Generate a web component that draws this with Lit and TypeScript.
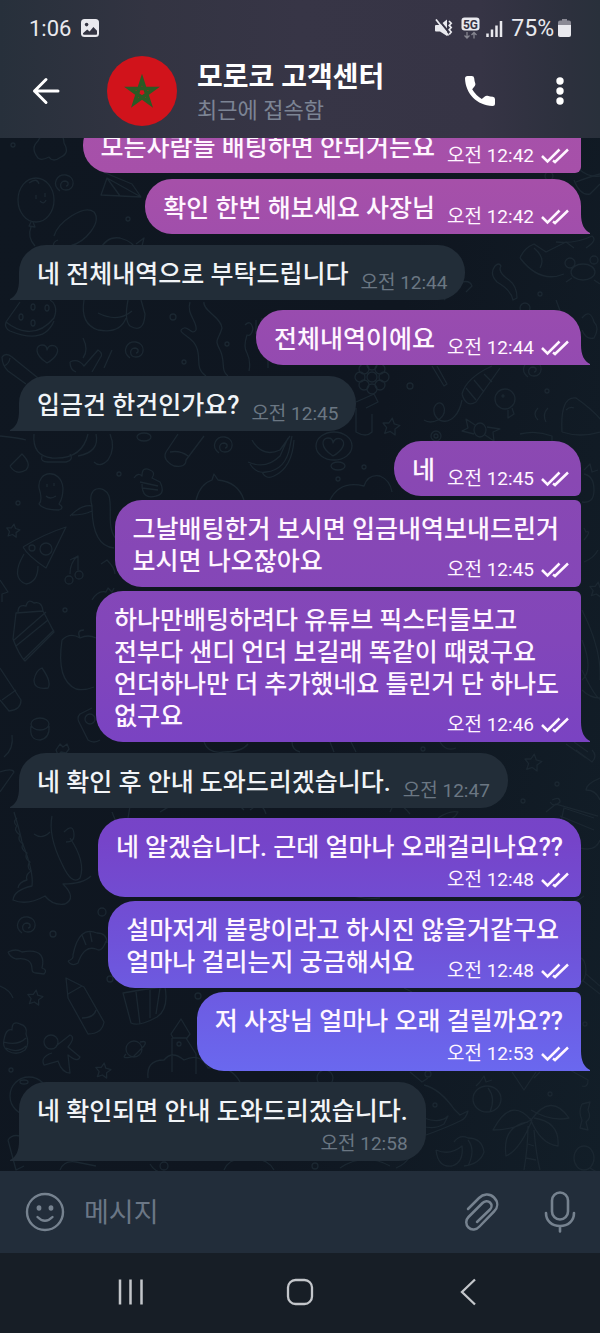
import { LitElement, html, css, svg } from "lit";
import { customElement, property } from "lit/decorators.js";

type Placement = "beside" | "below" | "within";

interface Message {
  out: boolean;
  lines: string[];
  time: string;
  place: Placement;
  first: boolean;
  last: boolean;
  regrouped?: boolean;
}

const msg = (
  out: boolean,
  lines: string[],
  time: string,
  place: Placement = "beside",
  first = true,
  last = true
): Message => ({ out, lines, time, place, first, last });

const MESSAGES: Message[] = [
  msg(true, ["모든사람들 배팅하면 안되거든요"], "12:42", "beside", false, false),
  { ...msg(true, ["확인 한번 해보세요 사장님"], "12:42"), regrouped: true },
  msg(false, ["네 전체내역으로 부탁드립니다"], "12:44"),
  msg(true, ["전체내역이에요"], "12:44"),
  msg(false, ["입금건 한건인가요?"], "12:45"),
  msg(true, ["네"], "12:45", "beside", true, false),
  msg(true, ["그날배팅한거 보시면 입금내역보내드린거", "보시면 나오잖아요"], "12:45", "within", false, false),
  msg(
    true,
    ["하나만배팅하려다 유튜브 픽스터들보고", "전부다 샌디 언더 보길래 똑같이 때렸구요", "언더하나만 더 추가했네요 틀린거 단 하나도", "없구요"],
    "12:46",
    "within",
    false,
    true
  ),
  msg(false, ["네 확인 후 안내 도와드리겠습니다."], "12:47"),
  msg(true, ["네 알겠습니다. 근데 얼마나 오래걸리나요??"], "12:48", "below", true, false),
  msg(true, ["설마저게 불량이라고 하시진 않을거같구요", "얼마나 걸리는지 궁금해서요"], "12:48", "within", false, false),
  msg(true, ["저 사장님 얼마나 오래 걸릴까요??"], "12:53", "below", false, true),
  msg(false, ["네 확인되면 안내 도와드리겠습니다."], "12:58", "below"),
];

@customElement("chat-message")
export class ChatMessage extends LitElement {
  @property({ attribute: false }) message!: Message;

  static styles = css`
    :host {
      display: flex;
    }
    .bubble {
      position: relative;
      display: flex;
      box-sizing: border-box;
      padding: 14px 12px 5px 18px;
      border-radius: 27px;
    }
    .out {
      margin-left: auto;
      color: #fff6ff;
      background: linear-gradient(
          #a753ab 0,
          #a650a9 180px,
          #964bb0 340px,
          #8948b3 480px,
          #8246ba 640px,
          #7a43c2 740px,
          #7644c9 840px,
          #6f52d8 940px,
          #6a68ef 1072px
        )
        fixed;
    }
    .in {
      padding-right: 18px;
      color: #f1f4f7;
      background: #222d38;
    }
    .out.joined {
      border-top-right-radius: 6px;
    }
    .out.open {
      border-bottom-right-radius: 6px;
    }
    .out.tail {
      border-bottom-right-radius: 0;
    }
    .in.tail {
      border-bottom-left-radius: 0;
    }
    .tail::after {
      content: "";
      position: absolute;
      bottom: 0;
      width: 10px;
      height: 20px;
      background: inherit;
    }
    .out.tail::after {
      left: 100%;
      clip-path: path("M0 0C0 10 3 16 9 19L9 20L0 20Z");
    }
    .in.tail::after {
      right: 100%;
      clip-path: path("M10 0C10 10 7 16 1 19L1 20L10 20Z");
    }
    .beside {
      align-items: flex-end;
      gap: 12px;
    }
    .below {
      flex-direction: column;
    }
    .within {
      display: grid;
    }
    .text {
      margin: 0;
      padding-bottom: 4px;
      font-size: 25px;
      line-height: 32px;
      font-weight: 500;
    }
    .out.below .text {
      padding-right: 6px;
    }
    .within .text {
      grid-area: 1 / 1;
      padding-right: 10px;
    }
    .meta {
      display: flex;
      align-items: center;
      align-self: flex-end;
      gap: 7px;
      font-size: 19px;
      line-height: 24px;
      white-space: nowrap;
    }
    .within .meta {
      grid-area: 1 / 1;
      place-self: end;
    }
    .in .meta {
      color: #6b7783;
    }
    .checks {
      width: 28px;
      height: 16px;
    }
  `;

  render() {
    const m = this.message;
    const cls = [
      "bubble",
      m.out ? "out" : "in",
      m.place,
      m.first ? "" : "joined",
      m.last ? "tail" : "open",
    ].join(" ");
    return html`<div class=${cls}>
      <p class="text">${m.lines.map((l, i) => (i ? html`<br />${l}` : l))}</p>
      <div class="meta">
        <time>오전 ${m.time}</time>
        ${m.out
          ? html`<svg class="checks" viewBox="0 0 28 16" fill="none" stroke="currentColor" stroke-width="2.5" aria-label="읽음">
              <path d="M1 8L6.500 13.500L18.500 1.500M12 12.500L14 14L27 1.500" />
            </svg>`
          : null}
      </div>
    </div>`;
  }
}

/* Doodle helpers for the wallpaper */
const star = (x: number, y: number, r: number) => {
  let d = "";
  for (let i = 0; i < 10; i++) {
    const a = -Math.PI / 2 + (i * Math.PI) / 5 + 0.15;
    const k = i % 2 ? r * 0.5 : r;
    d += `${i ? "L" : "M"}${(x + k * Math.cos(a)).toFixed(1)} ${(y + k * Math.sin(a)).toFixed(1)}`;
  }
  return d + "Z";
};
const ring = (x: number, y: number, rx: number, ry = rx) =>
  `M${x - rx} ${y}a${rx} ${ry} 0 1 0 ${2 * rx} 0a${rx} ${ry} 0 1 0 ${-2 * rx} 0`;
const heart = (x: number, y: number) =>
  `M${x} ${y + 9}c-14-9-11-18-5-18q5 0 5 5q2-6 8-4c6 4 1 12-8 17`;
const spiral = (x: number, y: number) =>
  `M${x - 6} ${y + 7}c-9-7-3-17 6-16c10 2 9 15 0 15c-7 0-7-9-1-9c5 1 3 5 1 5`;
const candy = (x: number, y: number) =>
  `${ring(x, y, 6, 7)}M${x - 5} ${y - 5}l-9-6l2 9l-6 3l12 3M${x + 5} ${y + 5}l9 6l-1-9l7-3l-13-2`;
const flower = (x: number, y: number) => {
  let d = ring(x, y, 5);
  for (let i = 0; i < 8; i++) {
    const a = (i * Math.PI) / 4;
    d += ring(Math.round(x + 12 * Math.cos(a)), Math.round(y + 12 * Math.sin(a)), 5, 5);
  }
  return d;
};

const DOODLES: string[] = [
  "M38 158q-8-10 0-17q4-9 14-6q12-3 12 8q6 10-3 14q-8 6-12 0q-8 4-11 1",
  ring(13, 145, 2),
  ring(36, 200, 18, 22) + "M31 222l-2 4l6 1l-2-5M31 227q-4 10 4 19M29 183q8-6 10 1M36 195v4M45 193v4M40 201q4 4 6-1",
  spiral(66, 184),
  "M101 195L107 178L141 197ZM107 178L120 196L141 197M103 172L132 184L141 197",
  "M54 236c4-14 30-32 40-24c8 10-8 30-24 34M58 240c-6 2-6 8-1 10",
  ring(128, 219, 2),
  "M100 250q6-14 20-12q14 4 16 12M136 244l8-6l-2 8",
  "M6 322C16 330 36 340 54 318C58 308 54 302 50 300M6 322q-2 6 4 9q34 14 44-10M6 322L20 302",
  ring(21, 317, 2, 3) + ring(33, 307, 2, 3) + ring(33, 323, 2, 3) + ring(47, 308, 2, 3),
  "M2 357q4-5 10 0L38 378M2 357q0 8 6 14L26 384M10 358q-1 6-6 8",
  heart(47, 354),
  "M84 300q-4 24 14 30q22 4 28-12M98 313q20 10 34-2M128 300q-4 20 2 26q14 8 15-12l-4-14",
  spiral(136, 351),
  "M83 338q6 12 0 20M70 362q8-4 14 4l14-16q6 4 2 8l-8 14M70 362q0 8 6 10M112 350l-8 18",
  ring(173, 317, 3) + ring(184, 362, 2) + ring(227, 344, 2),
  "M190 302c-4 12 8 20 6 28c-4 6-8-4-12-2c-10 4 8 8 12 18c6 12-2 22 10 30M204 302c-2 8 18 16 18 26c-4 14-8 10-2 22c6 12 0 20 8 26",
  "M245 325q6-6 8 4q-2 8-6 6q-4 12 0 18q4 8 2 18M256 320v14M262 318v16M268 340v28",
  "M34 434q-2 22 18 24q30 2 36-24M42 456q-2 6 6 6h18q8-2 4-8M96 434q4 18-18 22M110 434q6 14-2 26q-8 8-14 2",
  "M10 466q10-10 12-12q10 10 4 16q-10 6-16-4M0 436q20 2 26 4",
  ring(144, 437, 7, 4),
  "M178 434l-12 18q-4 8 8 14q12 2 12-6l18-24M170 452q10-2 18 4",
  spiral(225, 446),
  "M252 440q10 18 28 10l10-14M248 462q18 8 32-6l8-18M250 464q6 10 16 8q20-2 24-26l2-10M262 472q4 8 12 4q18-8 20-36",
  "M39 488c-2-18 22-20 24 0q0 10-4 16q6 4 0 6q-16 0-20-6q4-4 0-16M47 484v3M54 483v3M46 496q4 4 10 0",
  ring(119, 474, 2) + ring(18, 503, 2),
  "M134 478q4-6 8-2q0-10 8-6q6 2 2 8l8 4q6 12-4 14q-14 4-14-12M140 482l18 4M142 488l16 2",
  "M70 516q12-12 22-10c-6-20 12-22 17-10c4 14-4 34 10 46M92 506q0 40 22 42M72 515q12 0 20-4",
  "M196 500q4-16 16-20l2-6l4 6q20 2 26 20",
  star(13, 531, 7),
  "M23 547Q44 534 66 527L46 568Q28 556 23 547M24 554q-14 24 2 30q12-2 12-18" + ring(46, 549, 6) + ring(32, 548, 3),
  ring(69, 580, 4) + ring(79, 575, 4) + "M70 574q0-12 8-18M78 570l0-14l-8 4",
  "M101 564l6-4q8 8 8 14M0 580l8 12l-6 2v8",
  "M18 612q0-8 8-6q2-8 8-3q8-2 9 8M16 613l-3 26q6 16 12 22L54 632L43 611ZM14 640l32-28M16 646l32-26M23 660L54 630",
  ring(65, 610, 2),
  "M62 640q8-8 18-2q8-4 16 0M62 640q-6 40 14 49q8 2 18-2M80 638q-4-8 4-8",
  "M34 680q2-10 8-12q10 14 6 20q-14 2-14-8M0 668L21 700q0 10-12 11L0 700M2 700l14-10",
  ring(40, 724, 9, 6) + "M31 726q-2 14 9 14q10-2 9-14",
  "M92 708L80 714q-4 4 0 10l8 16q6 4 12 0" + ring(90, 719, 5),
  "M60 744l3 3l4-3l2 5l-3 4l-5-1l-3 3l-2-5ZM12 735q2 14-8 22",
  ring(134, 612, 2) + "M92 600q6-10 14-8l2-4l4 4l2-4",
  "M14 812q6 20 8 30q12 30 10 44q-18 4-19 14q14 6 32-4q8 10 20 8q12-6-2-20q20 0 28-8M52 816q-4 20 10 48q10 22 18 14q6-16-10-40M50 832q-8 8-16 2M64 832q10-10 10 4q0 6-8 6",
  "M17 818q-5 4 0 8q-4 4 3 9q-3 5 3 9q-3 5 4 9q-3 5 3 9q-4 5 1 9q-6 4-4 9q-8 2-9 8M0 772q12-4 14 0L0 792",
  ring(102, 912, 4) + ring(53, 934, 3) + ring(110, 979, 3),
  spiral(28, 926),
  "M8 952q8-4 14 0c22-4 22 8 20 16q6 2 2 6l-8-1q-4 0-4-4q0-12-16-10q-6-2-8-7",
  "M68 961q6-2 5-6q6-30 24-22q10 0 10 10M68 961q4 6 10 2q6-18 18-14q6 4 10-8M82 935l4 10M90 932l2 10",
  "M0 986q10 4 13 12M66 978L84 987L104 1022q-2 12-16 12L68 998ZM68 994l14-8M82 1018q12 0 14-8",
  star(35, 998, 8),
  "M123 993q20-4 42-6q4 22-8 30q-18 10-26 6ZM136 992l4 32M150 990v28M160 988l-4 26",
  ring(198, 996, 3) + ring(179, 1044, 2) + ring(11, 1070, 2),
  "M4 1040q2-12 8-10q0-10 8-6q8 2 6 10q4 10-1 16q-8 6-17 1q-6-4-4-11M4 1042q14 4 22-4M6 1048q12 6 20-2",
  ring(51, 1042, 7) + "M56 1046l14-11q6 2-2 12l12 10q-2 6-12-2l2 18q-8 0-12-12l-14 4q-4-8 8-12",
  ring(134, 1049, 8) + "M126 1054q-6 6 8 2l10-10q4-6-4-4",
  "M171 1034l10-15l9 15l-3 4h-14ZM172 1038v34M186 1038l10 16v20M148 1078q-2-18 16-18q8-10 20 0q16-8 24 8q22-4 32 14",
  star(103, 1071, 8),
  ring(29, 1096, 19) + ring(24, 1082, 4, 2) + "M8 1140q4-6 12-4M8 1140l8 30l8-4",
  "M60 1170q4-10 16-8l20 4M150 1164q6 10 16 8l16 0" + ring(164, 1166, 4),
  "M224 1170q6-14 24-10q18-4 26 10",
  "M160 812q30-20 50-8q20-10 34 6M250 810q12-10 16 4",
  "M204 742q4 12 20 10q18 0 24-8M292 742q0 8 8 10M112 812l4 10M130 806l-2 12",
  ring(549, 176, 4) + "M574 180q6 16 16 14l10-10M576 182q16-6 24-8",
  "M580 170q10 8 20 6M556 242q20 2 36-6q6 4-6 12M520 258q4-10 14-14l12 8l20-10l8 6M520 258q20 26 44 16M534 248q12 10 6 20",
  ring(583, 272, 12, 8) + ring(570, 263, 5) + ring(594, 260, 4) + "M572 278l-6 4M594 280l6 4",
  "M495 266q-6 8 2 16q14 8 16 18l4-2q0-12-8-18q-12-8-8-14q-2-4-6 0",
  ring(540, 294, 2) + ring(410, 386, 3) + ring(547, 391, 2) + ring(525, 308, 5),
  "M582 318q8-10 12 4q6 6 0 16q-8 2-12-8M556 300l6 16l-2 8M444 300l12-12l6-6q8-2 10 4l-6 6",
  flower(372, 377),
  "M432 366l12 20l3-2l-10-18M462 394q4-16 30-28M462 394q4 14 14 8L500 368M466 388l10 12M474 380l10 12M484 374l8 8",
  "M462 400c-6 30-30 24-28 8c6-14 18 4 4 12q-8 4-14 0",
  ring(505, 399, 10) + "M508 410l0 8l6-4l-2-6" + ring(503, 396, 1),
  spiral(534, 370),
  "M562 432q-2-36 14-34q20 14 28 26M566 410q4-4 8-2M562 432q18 6 38 0",
  star(391, 427, 9),
  candy(480, 430),
  ring(436, 436, 5) + ring(436, 436, 2),
  "M538 420q-6-6 0-12M546 422q-4-8 2-14M520 434q16-4 32 2v10M356 402l18-8l4 8l-12 6M356 408v24q10 6 16 0l0-18",
  ring(334, 446, 18, 14) + heart(333, 447) + ring(338, 466, 7, 4) + ring(364, 467, 2) + ring(338, 479, 2),
  "M330 500q10-20 34-14q4-12 16-10q10 4 12 16",
  "M584 474q10 2 10 16q0 14-12 12M584 470l6-6l2 8l6-2",
  star(597, 590, 8),
  "M584 540q8-10 2-8l-2-4M584 562q10-4 14-12M582 610q20 40 18 70M582 670q14 30 20 30M582 690q8 8 18 8M582 640q12 30 0 40",
  "M440 742q6 10 16 6M566 744l20 14M574 742l14 10M330 742l4 10M350 740l6 12",
  ring(423, 749, 2) + ring(557, 784, 2) + ring(523, 801, 2),
  star(533, 763, 9),
  "M576 750l16 12q6-6 0-12M600 778q-14 6-14 12q10 0 14 10M546 812l10-8l42 12M552 800q8-4 8 2q-6 6-10 0M560 826l4-18l30 10M560 816l34 14M580 848q16 4 20-8",
  ring(580, 970, 6, 12) + "M582 980L600 994M586 974L600 986" + ring(585, 1024, 2),
  "M390 812q6-16 20 2M438 818q12-8 20-6q-4 8-12 8M340 892q20 8 40 6M560 900q12 6 24-4M404 988l8 4",
  "M410 1072l12 10l6-4M424 1085q16 4 30 24l6 6l8-4q-2 8-8 10q-12 6-34 14M424 1118q16 6 24-2l-4 8q-10 6-22 2" + ring(435, 1105, 2),
  ring(428, 1074, 3),
  ring(487, 1099, 14, 13) + "M488 1088q8 10 2 24M480 1082l-4 4M480 1082l4-6l2 6l6-2",
  "M512 1072L524 1090L536 1072M570 1070l18 10q0 8-6 6M540 1072l-6 6" + ring(550, 1094, 2),
  "M531 1120q-20-24-38 10q20 0 38-10M531 1120q20-28 38-2q-18 4-38-8M528 1122q-26 4-22 34q14-6 26-36M534 1118q26 4 24 28q-18-2-28-28M528 1126q0 20-4 44M534 1130q2 24 6 40M528 1144l6 2M526 1158l10 2",
  "M582 1104l8-2l-2 8q4 8-2 12l2 8l-8-2l2-8q-4-8 0-16",
  "M436 1150q14 6 26-4q2 16-10 20q-14 2-16-16M454 1142q6-8 14-4q14 0 16 14q-4 12-20 14M468 1140q8 10 0 26",
  ring(584, 1158, 10, 12) + "M590 1168l10 6M340 1168q24-16 50-2M396 1168q10-4 14-12" + ring(315, 1166, 3),
  ring(325, 1078, 8),
];

@customElement("app-root")
export class AppRoot extends LitElement {
  static styles = css`
    :host {
      display: flex;
      flex-direction: column;
      height: 100vh;
      overflow: hidden;
      background: #171e26;
      font-family: Roboto, "Noto Sans CJK KR", sans-serif;
      color: #fff;
    }
    button {
      display: flex;
      margin: 0;
      padding: 0;
      border: 0;
      background: none;
      color: inherit;
      cursor: pointer;
    }
    svg {
      display: block;
      fill: none;
      stroke: currentColor;
    }
    .header {
      flex: none;
      background: linear-gradient(90deg, #27303b 0%, #333442 25%, #373546 50%, #363445 80%, #2c303d 95%, #29303b 100%);
    }
    .status {
      display: flex;
      align-items: center;
      height: 56px;
      padding: 0 29px;
      font-size: 22px;
      color: #e9e9ee;
    }
    .picture {
      margin-left: 10px;
      margin-right: auto;
    }
    .network {
      margin-left: 8px;
    }
    .signal {
      margin: 0 8px 0 6px;
    }
    .charge {
      font-size: 23px;
    }
    .battery {
      margin-left: 4px;
    }
    .toolbar {
      display: flex;
      align-items: center;
      padding: 0 32px 12px;
    }
    .avatar {
      flex: none;
      width: 70px;
      height: 70px;
      margin: 0 20px 0 47px;
    }
    .peer {
      flex: 1;
      min-width: 0;
      padding-top: 4px;
    }
    .name {
      margin: 0;
      font-size: 28px;
      line-height: 36px;
      font-weight: 700;
      white-space: nowrap;
    }
    .seen {
      margin: 0;
      font-size: 22px;
      line-height: 30px;
      color: #7c8494;
      white-space: nowrap;
    }
    .more {
      margin-left: 56px;
    }
    .chat {
      position: relative;
      flex: 1;
      min-height: 0;
      overflow: hidden;
      display: flex;
      flex-direction: column;
      justify-content: flex-end;
      padding: 0 19px 10px;
      background: linear-gradient(100deg, #0f1721 0%, #0f1620 55%, #121e28 100%);
    }
    .wallpaper {
      position: absolute;
      inset: 0;
      width: 100%;
      height: 100%;
      color: #1b2731;
    }
    chat-message {
      position: relative;
      flex: none;
      margin-top: 4px;
    }
    .from-peer {
      margin-top: 11px;
    }
    .reply {
      margin-top: 10px;
    }
    .regroup {
      margin-top: 6px;
    }
    .composer {
      flex: none;
      display: flex;
      align-items: center;
      height: 82px;
      padding: 0 24px 0 25px;
      background: #222d3a;
      color: #76828f;
    }
    .field {
      flex: 1;
      min-width: 0;
      margin: 0 0 0 19px;
      padding: 2px 0 0;
      border: 0;
      outline: 0;
      background: none;
      font: inherit;
      font-size: 27px;
      line-height: 40px;
      color: #fff;
    }
    .field::placeholder {
      color: #6b7786;
      opacity: 1;
    }
    .mic {
      margin-left: 44px;
    }
    .nav {
      flex: none;
      display: grid;
      grid-template-columns: repeat(3, 1fr);
      height: 80px;
      padding: 0 47px 3px;
      box-sizing: border-box;
      justify-items: center;
      align-items: center;
      color: #c3c6ca;
    }
  `;

  private renderStatus() {
    return html`<div class="status">
      <span>1:06</span>
      <svg class="picture" width="18" height="18" viewBox="0 0 18 18" aria-hidden="true">
        <rect width="18" height="18" rx="3.5" fill="currentColor" stroke="none" />
        <circle cx="5.6" cy="5.6" r="1.8" fill="#333442" stroke="none" />
        <path d="M2 14.2L6.2 10.6L8.6 12.4L12.4 8L16 11.8V15Q16 15.8 15.2 15.8H3Q2 15.8 2 15Z" fill="#333442" stroke="none" />
      </svg>
      <svg width="18" height="18" viewBox="0 0 18 18" aria-hidden="true">
        <path d="M1 6H5L12 0.5V17L5 12.500H1Q0 12.500 0 11.500V7Q0 6 1 6Z" fill="currentColor" stroke="none" />
        <path d="M2.500 -0.500L14.500 14" stroke="#363445" stroke-width="2" />
        <path d="M1 0.500L13.500 16.500" stroke-width="1.800" />
        <path d="M14 2l2.200 2.200l-2 2.200l2 2.200l-2 2.200l2 2.200l-2 2.500" stroke-width="1.700" />
      </svg>
      <svg class="network" width="19" height="22" viewBox="0 0 19 22" aria-label="5G">
        <rect x="0.5" y="0.5" width="18" height="13" rx="3" fill="currentColor" stroke="none" />
        <text x="9.5" y="11.5" font-family="Roboto, sans-serif" font-size="12" font-weight="700" text-anchor="middle" fill="#363445" stroke="none">5G</text>
        <g stroke="#85858f" stroke-width="1.3">
          <path d="M6 15v6M3.5 18.5L6 21l2.500-2.500M13 21.500v-6M10.500 18L13 15.500l2.500 2.500" />
        </g>
      </svg>
      <svg class="signal" width="17" height="17" viewBox="0 0 17 17" stroke-width="2.500" aria-hidden="true">
        <path d="M1.500 17V13.500M6 17V9.500M10.500 17V5.500M15 17V1" />
      </svg>
      <span class="charge">75%</span>
      <svg class="battery" width="13" height="18" viewBox="0 0 13 18" stroke="none" aria-hidden="true">
        <path d="M4 0h5v1.500h2q2 0 2 2V6H0V3.500q0-2 2-2h2Z" fill="#8b8a95" stroke="none" />
        <path d="M0 6h13v10q0 2-2 2H2q-2 0-2-2Z" fill="currentColor" stroke="none" />
      </svg>
    </div>`;
  }

  render() {
    return html`
      <header class="header">
        ${this.renderStatus()}
        <div class="toolbar">
          <button aria-label="뒤로">
            <svg width="28" height="28" viewBox="0 0 28 28" stroke-width="3" stroke-linecap="round" stroke-linejoin="round">
              <path d="M26 14H2.500M14 2.500L2.500 14L14 25.500" />
            </svg>
          </button>
          <svg class="avatar" viewBox="0 0 70 70" role="img" aria-label="모로코 고객센터">
            <circle cx="35" cy="35" r="35" fill="#d1131b" stroke="none" />
            <path
              d="M35 23.500L42.600 47L22.600 32.500H47.400L27.400 47Z"
              stroke="#2b5a24"
              stroke-width="3.600"
              stroke-linejoin="miter"
            />
          </svg>
          <div class="peer">
            <h1 class="name">모로코 고객센터</h1>
            <p class="seen">최근에 접속함</p>
          </div>
          <button aria-label="전화">
            <svg width="32" height="32" viewBox="0 0 32 32">
              <path
                fill="currentColor"
                stroke="none"
                d="M3.500 1H7.800Q10 1 10.200 3.200Q10.400 6 11.300 8.600Q11.700 9.800 10.800 10.900L8.200 14.200Q11.800 20.400 17.800 23.900L21.100 21.300Q22.200 20.400 23.500 20.800Q26.200 21.600 28.800 21.800Q31 22 31 24.200V28.500Q31 31 28.500 31C13 30.500 1.500 18.500 1 3.500Q1 1 3.500 1Z"
              />
            </svg>
          </button>
          <button class="more" aria-label="더 보기">
            <svg width="16" height="30" viewBox="0 0 16 30">
              <g fill="currentColor" stroke="none">
                <circle cx="8" cy="5" r="3.700" />
                <circle cx="8" cy="15" r="3.700" />
                <circle cx="8" cy="25" r="3.700" />
              </g>
            </svg>
          </button>
        </div>
      </header>
      <main class="chat">
        <svg
          class="wallpaper"
          viewBox="0 138 600 1033"
          preserveAspectRatio="xMidYMin slice"
          stroke-width="1.300"
          stroke-linejoin="round"
          aria-hidden="true"
        >
          ${DOODLES.map((d) => svg`<path d=${d} />`)}
        </svg>
        ${MESSAGES.map(
          (m) => html`<chat-message
            class=${!m.out ? "from-peer" : m.regrouped ? "regroup" : m.first ? "reply" : ""}
            .message=${m}
          ></chat-message>`
        )}
      </main>
      <form class="composer" @submit=${(e: Event) => e.preventDefault()}>
        <button type="button" aria-label="이모티콘">
          <svg width="40" height="40" viewBox="0 0 40 40" stroke-width="2.400" stroke-linecap="round">
            <circle cx="20" cy="20" r="18" />
            <path d="M12.500 25Q20 32.500 27.500 25" />
            <g fill="currentColor" stroke="none">
              <ellipse cx="14" cy="16" rx="2.400" ry="2.800" />
              <ellipse cx="26" cy="16" rx="2.400" ry="2.800" />
            </g>
          </svg>
        </button>
        <input class="field" type="text" placeholder="메시지" aria-label="메시지" />
        <button type="button" aria-label="첨부">
          <svg width="36" height="40" viewBox="0 0 36 40" stroke-width="2.500" stroke-linecap="round" stroke-linejoin="round">
            <path
              d="M4 17L15 6C19 2 25.500 1 30 5.500C34.500 10 34 15.500 30 19.500L15.500 34.500C12.500 38 7.500 38.500 4.500 35.500C1.500 32.500 1.500 28 4.500 25L18.500 11C20.500 9 24 8.500 26 10.500C28 12.500 28 15.500 26 17.500L13 30"
            />
          </svg>
        </button>
        <button class="mic" type="button" aria-label="음성 메시지">
          <svg width="32" height="44" viewBox="0 0 32 44" stroke-width="2.600" stroke-linecap="round">
            <rect x="8" y="2.500" width="16" height="27" rx="8" />
            <path d="M2 23C2 31 8 36 16 36S30 31 30 23M16 36V41.500" />
          </svg>
        </button>
      </form>
      <nav class="nav">
        <button aria-label="최근 앱">
          <svg width="28" height="28" viewBox="0 0 28 28" stroke-width="2.500"><path d="M3 1.500V26.500M13.500 1.500V26.500M24.500 1.500V26.500" /></svg>
        </button>
        <button aria-label="홈">
          <svg width="28" height="28" viewBox="0 0 28 28" stroke-width="2.300"><rect x="2" y="2" width="24" height="24" rx="7.500" /></svg>
        </button>
        <button aria-label="뒤로 가기">
          <svg width="28" height="28" viewBox="0 0 28 28" stroke-width="2.300"><path d="M20 1.500L7 14L20 26.500" /></svg>
        </button>
      </nav>
    `;
  }
}
